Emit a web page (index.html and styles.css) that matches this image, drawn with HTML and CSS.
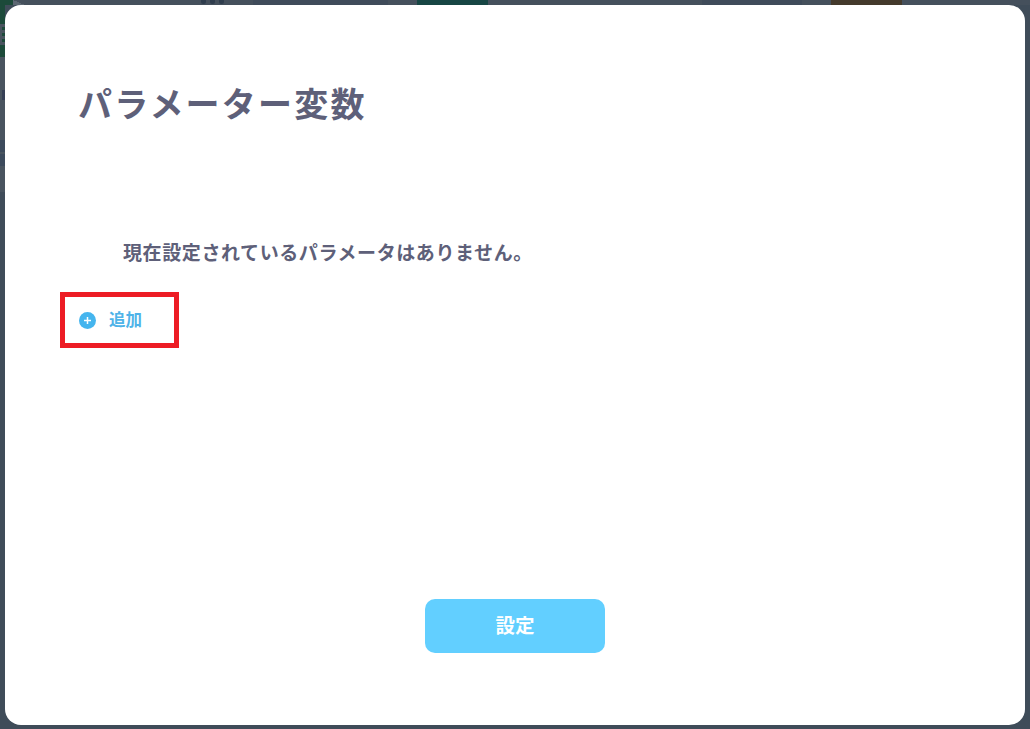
FILE: index.html
```html
<!DOCTYPE html>
<html lang="ja">
<head>
    <meta charset="UTF-8">
    <meta name="viewport" content="width=device-width, initial-scale=1.0">
    <title>パラメーター変数</title>
    <link rel="stylesheet" href="styles.css">
</head>
<body>
    <div class="backdrop">
        <div class="top-strip">
            <span class="strip-logo"></span>
            <span class="strip-fold"></span>
            <span class="strip-dots"><i></i><i></i><i></i></span>
            <span class="strip-tab"></span>
            <span class="strip-green"></span>
            <span class="strip-tab strip-tab-small"></span>
            <span class="strip-amber"></span>
        </div>
        <div class="left-strip">
            <span class="left-green"></span>
            <span class="left-menu"><i></i><i></i><i></i></span>
            <span class="left-green left-green-end"></span>
            <span class="left-glyph"></span>
            <span class="left-row"></span>
            <span class="left-row"></span>
        </div>
    </div>

    <div class="modal">
        <h1 class="modal-title">パラメーター変数</h1>
        <p class="empty-text">現在設定されているパラメータはありません。</p>
        <div class="add-box">
            <svg class="add-icon" width="17" height="17" viewBox="0 0 17 17">
                <circle cx="8.5" cy="8.5" r="8.5" fill="#45b5ee"/>
                <path d="M8.5 5v7M5 8.5h7" stroke="#fff" stroke-width="1.5"/>
            </svg>
            <span class="add-label">追加</span>
        </div>
        <div class="modal-footer">
            <button class="submit" type="button">設定</button>
        </div>
    </div>
</body>
</html>
```

FILE: styles.css
```css
html, body {
    height: 100%;
}
body {
    margin: 0;
    overflow: hidden;
    background-color: #3f4c59;
    font-family: "Noto Sans CJK JP", "Noto Sans", sans-serif;
}
.backdrop {
    height: 100%;
}
.top-strip {
    display: flex;
    height: 5px;
    background-color: #45505c;
}
.strip-logo {
    width: 13px;
    background-color: #1c4a3a;
}
.strip-fold {
    width: 12px;
    background: linear-gradient(to top right, #5d6873 50%, transparent 50%);
}
.strip-dots {
    display: flex;
    gap: 4px;
    margin-left: 176px;
}
.strip-dots i {
    width: 5px;
    height: 4px;
    border-radius: 0 0 3px 3px;
    background-color: #2f3d4d;
}
.strip-tab {
    width: 135px;
    margin-left: 29px;
    background-color: #3f4b5a;
}
.strip-green {
    width: 71px;
    margin-left: 29px;
    background-color: #174644;
}
.strip-tab-small {
    width: 100px;
    margin-left: 214px;
}
.strip-amber {
    width: 71px;
    margin-left: 29px;
    background-color: #443a2c;
}
.left-strip {
    display: flex;
    flex-direction: column;
    width: 5px;
    height: 187px;
    background-color: #49545f;
}
.left-green {
    height: 19px;
    background-color: #1c4a3a;
}
.left-green-end {
    height: 12px;
}
.left-menu {
    display: flex;
    flex-direction: column;
    align-items: flex-end;
    gap: 3px;
    height: 21px;
    box-sizing: border-box;
    padding-top: 3px;
}
.left-menu i {
    width: 3px;
    height: 3px;
    background-color: #1c4a3a;
}
.left-glyph {
    width: 3px;
    height: 10px;
    margin: 33px 0 0 2px;
    background-color: #353f55;
}
.left-row {
    height: 12px;
    margin-top: 2px;
    background-color: #3c4a5c;
}
.left-glyph + .left-row {
    margin-top: 40px;
}
.modal {
    position: absolute;
    top: 5px;
    left: 5px;
    width: 1020px;
    height: 720px;
    box-sizing: border-box;
    padding: 75px 0 72px 0;
    display: flex;
    flex-direction: column;
    background-color: #fff;
    border-radius: 16px;
}
.modal-title {
    margin: 0 0 0 73px;
    font-size: 34px;
    line-height: 46px;
    font-weight: 700;
    color: #5e6079;
    letter-spacing: 2.2px;
}
.empty-text {
    margin: 113px 0 0 118px;
    font-size: 19px;
    line-height: 26px;
    font-weight: 700;
    color: #5e6079;
    letter-spacing: 0.6px;
}
.add-box {
    display: flex;
    align-items: center;
    box-sizing: border-box;
    width: 119px;
    height: 56px;
    margin: 27px 0 0 55px;
    padding: 0 0 2px 14px;
    border: 5px solid #ed1c24;
}
.add-icon {
    flex: none;
    margin-top: 2px;
}
.add-label {
    margin-left: 13px;
    font-size: 16.5px;
    font-weight: 700;
    color: #4fb3e8;
}
.modal-footer {
    margin-top: auto;
    display: flex;
    justify-content: center;
}
.submit {
    width: 180px;
    height: 54px;
    padding: 0 0 4px 0;
    border: none;
    border-radius: 10px;
    background-color: #62cfff;
    color: #fff;
    font-family: inherit;
    font-size: 19.5px;
    font-weight: 700;
}
```
